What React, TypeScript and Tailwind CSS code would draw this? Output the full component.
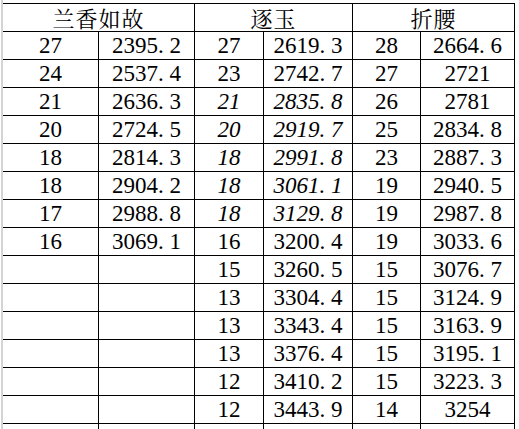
const groups = [
  {
    title: '兰香如故',
    rows: [
      ['27', '2395.2'],
      ['24', '2537.4'],
      ['21', '2636.3'],
      ['20', '2724.5'],
      ['18', '2814.3'],
      ['18', '2904.2'],
      ['17', '2988.8'],
      ['16', '3069.1'],
    ],
  },
  {
    title: '逐玉',
    rows: [
      ['27', '2619.3'],
      ['23', '2742.7'],
      ['21', '2835.8', 'i'],
      ['20', '2919.7', 'i'],
      ['18', '2991.8', 'i'],
      ['18', '3061.1', 'i'],
      ['18', '3129.8', 'i'],
      ['16', '3200.4'],
      ['15', '3260.5'],
      ['13', '3304.4'],
      ['13', '3343.4'],
      ['13', '3376.4'],
      ['12', '3410.2'],
      ['12', '3443.9'],
    ],
  },
  {
    title: '折腰',
    rows: [
      ['28', '2664.6'],
      ['27', '2721'],
      ['26', '2781'],
      ['25', '2834.8'],
      ['23', '2887.3'],
      ['19', '2940.5'],
      ['19', '2987.8'],
      ['19', '3033.6'],
      ['15', '3076.7'],
      ['15', '3124.9'],
      ['15', '3163.9'],
      ['15', '3195.1'],
      ['15', '3223.3'],
      ['14', '3254'],
    ],
  },
]

// SimSun-style number: the period takes a full half-width cell
function Num({ value }: { value: string }) {
  const [whole, frac] = value.split('.')
  if (frac === undefined) return <>{value}</>
  return (
    <>
      {whole}
      <span className="inline-block w-[0.5em] text-left">.</span>
      {frac}
    </>
  )
}

const cell =
  "h-[28px] border-r border-b border-black flex items-center justify-center font-['Liberation_Serif']"

export default function App() {
  const rowCount = 15

  return (
    <div className="h-screen overflow-hidden bg-white flex font-serif">
      <div className="w-[1px] shrink-0" />
      <div className="w-[2px] shrink-0 bg-[#d4d4d4]" />
      <div className="pt-[3px]">
        <div className="grid grid-cols-[96px_96px_69px_89px_68px_94px] border-t border-black text-[23px] text-black leading-none">
          {groups.map((g) => (
            <div key={g.title} className={`${cell} col-span-2`}>
              <span className="font-['Noto_Serif_CJK_SC'] text-[22px] tracking-[1px]">
                {g.title}
              </span>
            </div>
          ))}
          {Array.from({ length: rowCount }).map((_, r) =>
            groups.map((g) => {
              const row = g.rows[r]
              const italic = row && row[2] === 'i' ? 'italic' : ''
              return [
                <div key={`${g.title}-${r}-a`} className={`${cell} ${italic}`}>
                  {row ? row[0] : ''}
                </div>,
                <div key={`${g.title}-${r}-b`} className={`${cell} ${italic}`}>
                  {row ? <Num value={row[1]} /> : ''}
                </div>,
              ]
            })
          )}
        </div>
      </div>
    </div>
  )
}
